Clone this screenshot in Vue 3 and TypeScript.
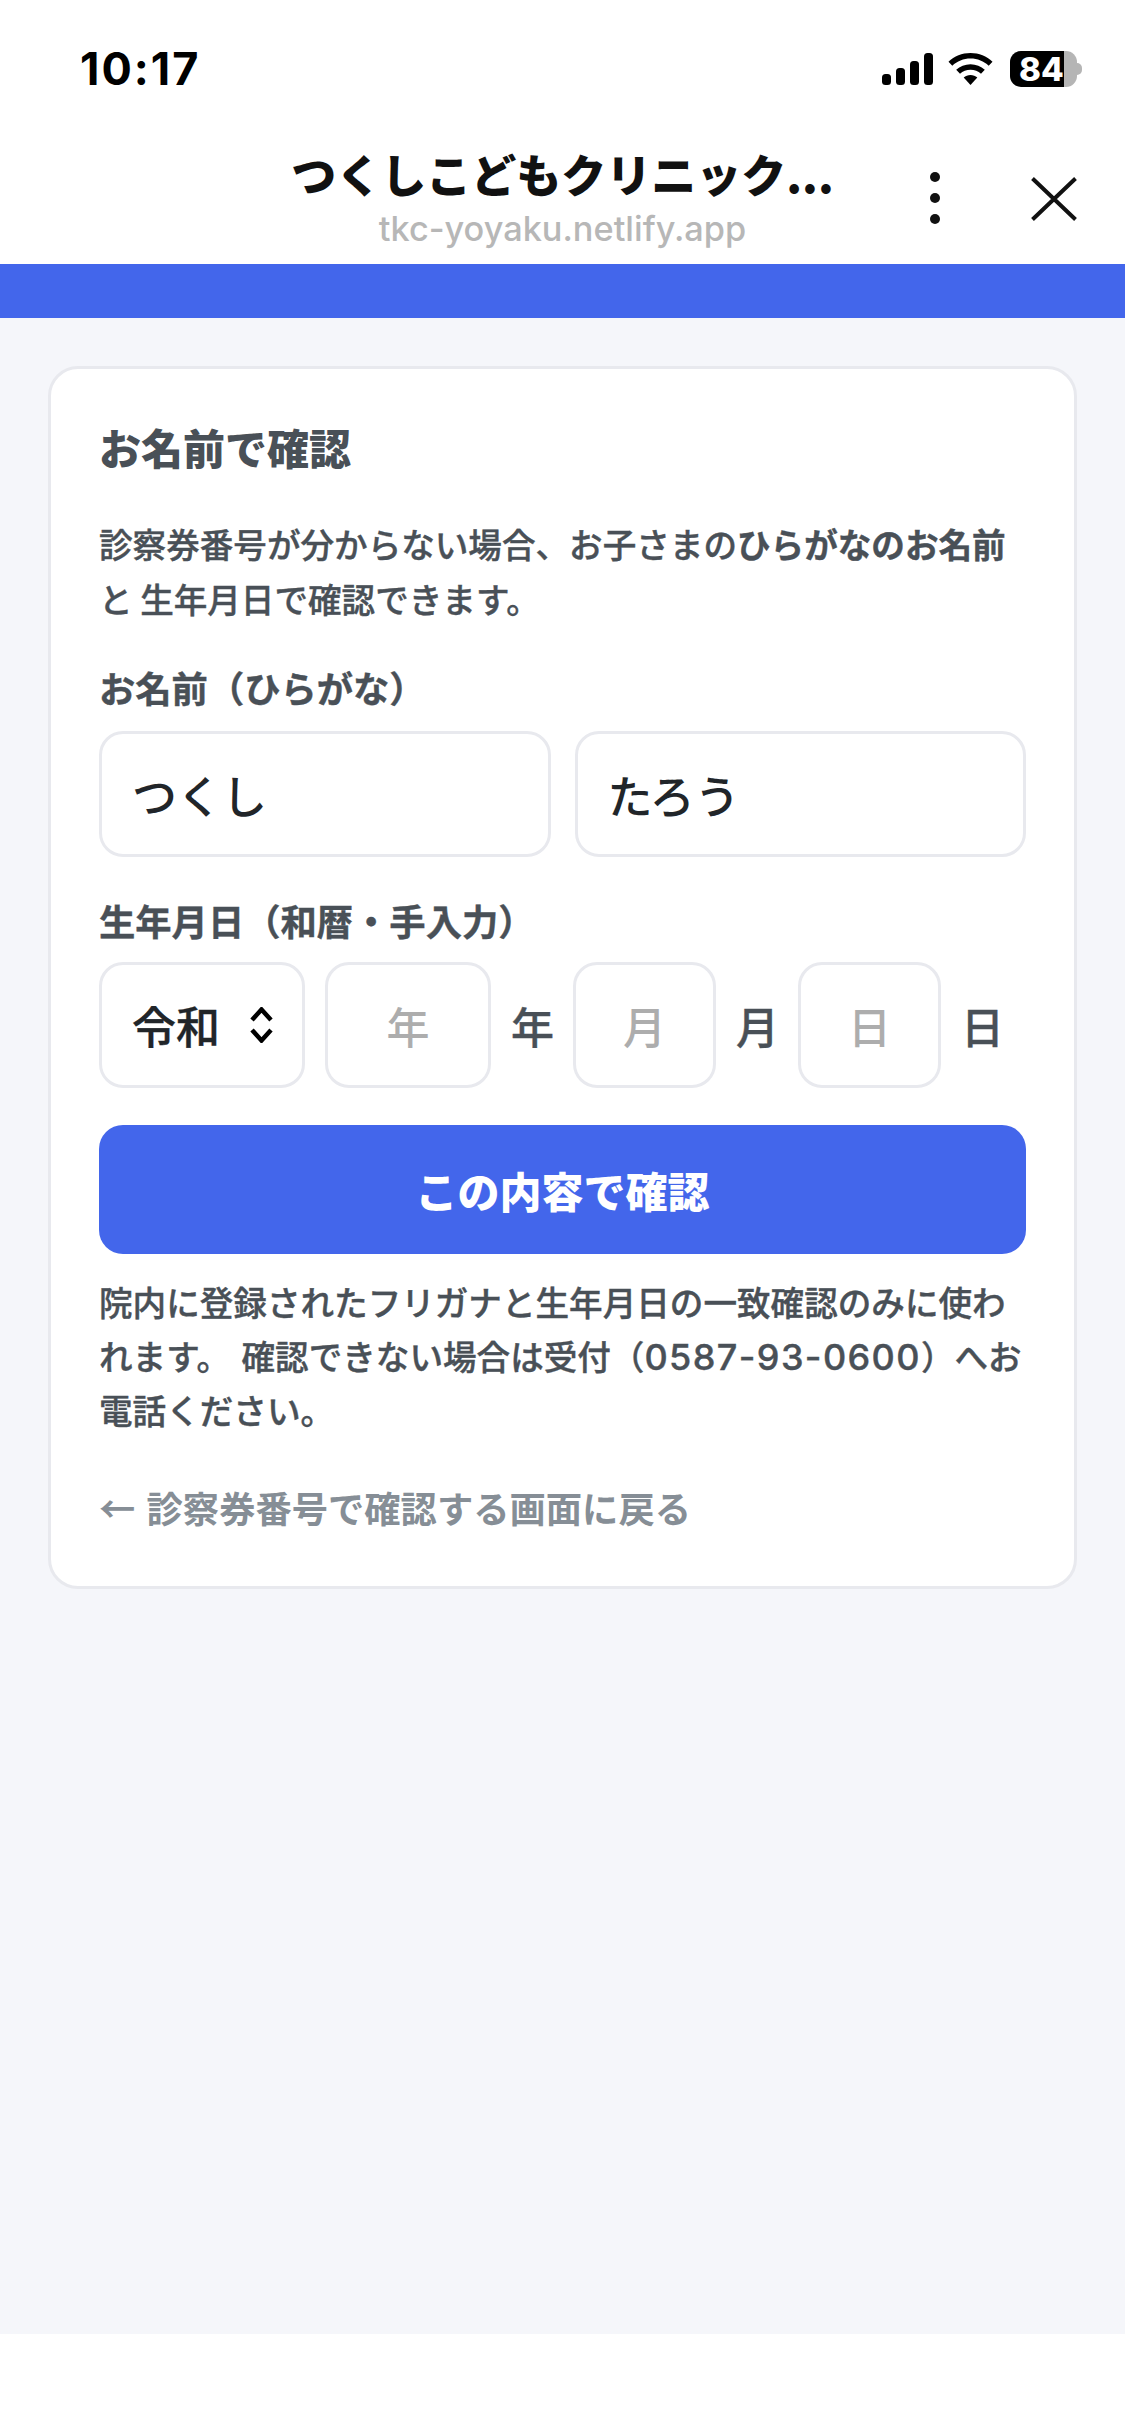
<template>
  <div class="screen">
    <div class="status">
      <span class="time">10:17</span>
      <div class="status__icons">
        <svg class="signal" width="51" height="32" viewBox="0 0 51 32">
          <rect x="0" y="21" width="9" height="11" rx="3.5" />
          <rect x="14" y="15" width="9" height="17" rx="3.5" />
          <rect x="28" y="8" width="9" height="24" rx="3.5" />
          <rect x="42" y="0" width="9" height="32" rx="3.5" />
        </svg>
        <svg class="wifi" width="45" height="32" viewBox="0 0 45 32">
          <path d="M22.5 0C14 0 6.300 3.300 0.500 8.700L4.300 12.700C9.100 8.300 15.500 5.600 22.500 5.600S35.900 8.300 40.700 12.700L44.500 8.700C38.700 3.300 31 0 22.500 0Z" />
          <path d="M22.500 11.200C17 11.200 12 13.300 8.200 16.800L12 20.800C14.800 18.300 18.500 16.800 22.500 16.800S30.200 18.300 33 20.800L36.800 16.800C33 13.300 28 11.200 22.500 11.200Z" />
          <path d="M22.500 22C19.900 22 17.500 23 15.700 24.600L22.500 32L29.300 24.600C27.500 23 25.100 22 22.500 22Z" />
        </svg>
        <div class="battery">
          <div class="battery__body">
            <span class="battery__level">84</span>
          </div>
          <div class="battery__nub"></div>
        </div>
      </div>
    </div>

    <header class="nav">
      <div class="nav__titles">
        <div class="nav__title">つくしこどもクリニック...</div>
        <div class="nav__url">tkc-yoyaku.netlify.app</div>
      </div>
      <svg class="nav__more" width="14" height="54" viewBox="0 0 14 54">
        <circle cx="7" cy="6" r="5" />
        <circle cx="7" cy="27" r="5" />
        <circle cx="7" cy="48" r="5" />
      </svg>
      <svg class="nav__close" width="46" height="44" viewBox="0 0 46 44">
        <path d="M1.500 1.500L44.500 42.500M44.500 1.500L1.500 42.500" />
      </svg>
    </header>

    <div class="band"></div>

    <main class="page">
      <section class="card">
        <h2 class="card__title">お名前で確認</h2>
        <p class="desc">
          診察券番号が分からない場合、お子さまの<strong>ひらがなのお名前</strong>と 生年月日で確認できます。
        </p>

        <label class="label label--name">お名前（ひらがな）</label>
        <div class="name-row">
          <input class="field" type="text" :value="lastName" />
          <input class="field" type="text" :value="firstName" />
        </div>

        <label class="label label--birth">生年月日（和暦・手入力）</label>
        <div class="birth-row">
          <div class="era">
            <span>令和</span>
            <svg width="25" height="36" viewBox="0 0 25 36">
              <path d="M3 13L12.500 2.500L22 13M3 23L12.500 33.500L22 23" />
            </svg>
          </div>
          <template v-for="part in dateParts" :key="part.unit">
            <input class="field field--date" :class="part.cls" type="text" :placeholder="part.unit" />
            <span class="unit">{{ part.unit }}</span>
          </template>
        </div>

        <button class="submit" type="button">この内容で確認</button>

        <p class="note">
          院内に登録されたフリガナと生年月日の一致確認のみに使われます。 確認できない場合は受付（<span class="phone">0587-93-0600</span>）へお電話ください。
        </p>

        <a class="back">← 診察券番号で確認する画面に戻る</a>
      </section>
    </main>

    <div class="bottom"></div>
  </div>
</template>

<script setup lang="ts">
const lastName = "つくし"
const firstName = "たろう"

const dateParts = [
  { unit: "年", cls: "field--year" },
  { unit: "月", cls: "field--short" },
  { unit: "日", cls: "field--short" },
]
</script>

<style>
body {
  background: #fff;
}
</style>

<style scoped>
.screen {
  width: 1125px;
  height: 2436px;
  display: flex;
  flex-direction: column;
  background: #fff;
  font-family: "Noto Sans CJK JP", "Noto Sans", sans-serif;
  color: #495057;
  text-spacing-trim: space-all;
}

.status {
  height: 130px;
  box-sizing: border-box;
  padding: 45px 43px 0 80px;
  display: flex;
  justify-content: space-between;
  align-items: flex-start;
}

.time {
  font-family: Inter, sans-serif;
  font-size: 45px;
  font-weight: 700;
  line-height: 48px;
  letter-spacing: 2px;
  color: #000;
}

.status__icons {
  display: flex;
  align-items: center;
  padding-top: 6px;
}

.signal,
.wifi {
  fill: #000;
}

.wifi {
  margin: 0 17px 0 15px;
}

.battery {
  display: flex;
  align-items: center;
}

.battery__body {
  width: 67px;
  height: 36px;
  border-radius: 11px;
  background: linear-gradient(90deg, #000 81%, #b5b5b5 81%);
  box-sizing: border-box;
  padding-left: 9px;
  display: flex;
  align-items: center;
}

.battery__level {
  font-family: Inter, sans-serif;
  font-size: 33px;
  font-weight: 800;
  line-height: 36px;
  color: #fff;
}

.battery__nub {
  width: 5px;
  height: 12px;
  background: #b5b5b5;
  border-radius: 0 5px 5px 0;
}

.nav {
  height: 134px;
  display: grid;
  grid-template-columns: 1fr;
  position: relative;
}

.nav__titles {
  padding-top: 19px;
  text-align: center;
}

.nav__title {
  font-size: 45px;
  font-weight: 900;
  line-height: 50px;
  color: #111;
}

.nav__url {
  margin-top: 10px;
  font-family: Inter, sans-serif;
  font-size: 34.3px;
  font-weight: 500;
  line-height: 40px;
  color: #b7b7b7;
}

.nav__more {
  position: absolute;
  left: 928px;
  top: 41px;
  fill: #111;
}

.nav__close {
  position: absolute;
  left: 1031px;
  top: 47px;
  fill: none;
  stroke: #111;
  stroke-width: 4;
}

.band {
  height: 54px;
  background: #4366eb;
}

.page {
  flex: 1;
  background: #f5f6fa;
  padding: 48px 48px 0;
}

.card {
  background: #fff;
  border: 3px solid #e8e9ee;
  border-radius: 30px;
  box-sizing: border-box;
  height: 1223px;
  padding: 0 48px;
}

.card__title {
  margin: 48px 0 0;
  font-size: 42px;
  font-weight: 900;
  line-height: 60px;
  color: #495057;
}

.desc {
  margin: 39px 0 0;
  font-size: 33.6px;
  font-weight: 500;
  line-height: 55px;
  -webkit-text-stroke: 0.4px currentColor;
}

.desc strong {
  font-weight: 700;
}

.label {
  display: block;
  font-size: 36.3px;
  font-weight: 700;
  line-height: 50px;
  -webkit-text-stroke: 0.4px currentColor;
}

.label--name {
  margin-top: 36px;
}

.label--birth {
  margin-top: 38px;
}

.name-row {
  display: flex;
  gap: 24px;
  margin-top: 19px;
}

.field {
  flex: 1;
  min-width: 0;
  height: 126px;
  box-sizing: border-box;
  border: 3px solid #e8e9ee;
  border-radius: 24px;
  padding: 0 30px;
  background: #fff;
  font-family: inherit;
  font-size: 45px;
  font-weight: 500;
  color: #212529;
  outline: none;
}

.birth-row {
  display: flex;
  align-items: center;
  gap: 20px;
  margin-top: 17px;
}

.era {
  width: 206px;
  height: 126px;
  flex: none;
  box-sizing: border-box;
  border: 3px solid #e8e9ee;
  border-radius: 24px;
  padding: 0 28px 0 30px;
  display: flex;
  align-items: center;
  justify-content: space-between;
  font-size: 44px;
  font-weight: 500;
  color: #212529;
  -webkit-text-stroke: 0.4px currentColor;
}

.era svg {
  fill: none;
  stroke: #000;
  stroke-width: 4.500;
}

.field--date {
  flex: none;
  padding: 0;
  text-align: center;
  font-size: 43px;
}

.field--date::placeholder {
  color: #adadad;
  opacity: 1;
}

.field--year {
  width: 166px;
}

.field--short {
  width: 143px;
}

.unit {
  width: 43px;
  margin-right: -1px;
  flex: none;
  font-size: 43px;
  font-weight: 500;
  line-height: 60px;
  color: #495057;
  -webkit-text-stroke: 0.4px currentColor;
}

.submit {
  display: block;
  width: 100%;
  height: 129px;
  margin-top: 37px;
  border: 0;
  border-radius: 24px;
  background: #4366eb;
  color: #fff;
  font-family: inherit;
  font-size: 42px;
  font-weight: 900;
}

.note {
  margin: 21px 0 0;
  font-size: 33.6px;
  font-weight: 500;
  line-height: 54px;
  word-spacing: 4px;
  -webkit-text-stroke: 0.4px currentColor;
}

.phone {
  font-family: Inter, sans-serif;
  font-size: 36px;
  line-height: 1;
  letter-spacing: 1.4px;
}

.back {
  display: block;
  margin-top: 45px;
  font-size: 36.3px;
  font-weight: 700;
  line-height: 50px;
  word-spacing: 3px;
  color: #868e96;
}

.bottom {
  height: 102px;
  background: #fff;
}
</style>
